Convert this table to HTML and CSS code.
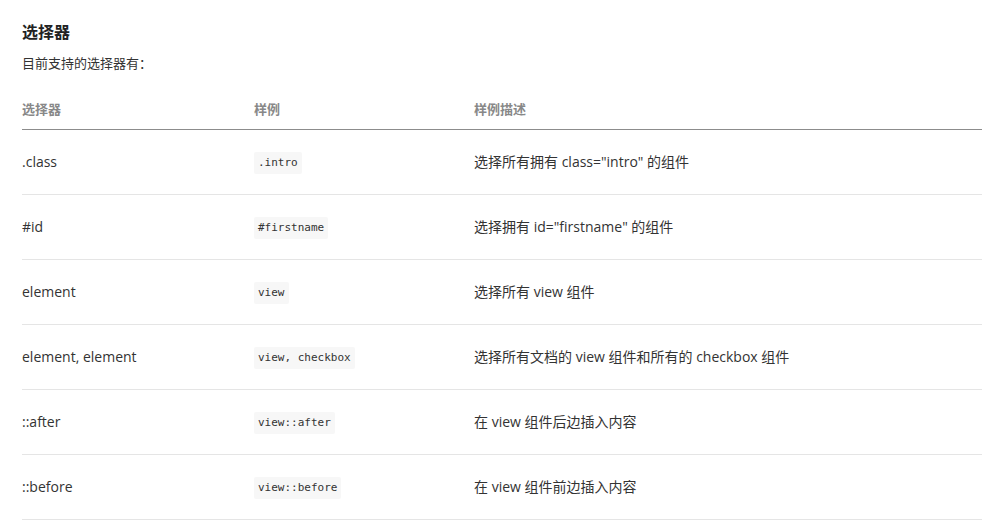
FILE: index.html
```html
<!DOCTYPE html>
<html lang="zh-CN">
<head>
<meta charset="utf-8">
<title>选择器</title>
<link rel="stylesheet" href="styles.css">
</head>
<body>
<div class="doc">
  <h3 class="title">选择器</h3>
  <p class="lead">目前支持的选择器有：</p>
  <div class="table">
    <div class="row head">
      <div class="cell">选择器</div>
      <div class="cell">样例</div>
      <div class="cell">样例描述</div>
    </div>
    <div class="row">
      <div class="cell">.class</div>
      <div class="cell"><code>.intro</code></div>
      <div class="cell">选择所有拥有 class="intro" 的组件</div>
    </div>
    <div class="row">
      <div class="cell">#id</div>
      <div class="cell"><code>#firstname</code></div>
      <div class="cell">选择拥有 id="firstname" 的组件</div>
    </div>
    <div class="row">
      <div class="cell">element</div>
      <div class="cell"><code>view</code></div>
      <div class="cell">选择所有 view 组件</div>
    </div>
    <div class="row">
      <div class="cell">element, element</div>
      <div class="cell"><code>view, checkbox</code></div>
      <div class="cell">选择所有文档的 view 组件和所有的 checkbox 组件</div>
    </div>
    <div class="row">
      <div class="cell">::after</div>
      <div class="cell"><code>view::after</code></div>
      <div class="cell">在 view 组件后边插入内容</div>
    </div>
    <div class="row">
      <div class="cell">::before</div>
      <div class="cell"><code>view::before</code></div>
      <div class="cell">在 view 组件前边插入内容</div>
    </div>
  </div>
</div>
</body>
</html>
```
FILE: styles.css
```css
html, body {
  margin: 0;
  padding: 0;
  background: #fff;
}
body {
  font-family: "Open Sans", "Noto Sans CJK SC", sans-serif;
  color: #333;
  font-size: 14px;
}
.doc {
  width: 960px;
  padding: 21px 0 0 22px;
}
.title {
  margin: 0;
  font-size: 16px;
  line-height: 22px;
  font-weight: 700;
  color: #222;
}
.lead {
  margin: 10px 0 0;
  font-size: 13px;
  line-height: 20px;
  color: #333;
}
.table {
  margin-top: 16px;
}
.row {
  display: grid;
  grid-template-columns: 232px 220px 1fr;
  align-items: center;
  height: 64px;
  border-bottom: 1px solid #e5e5e5;
  line-height: 20px;
}
.row.head {
  height: 40px;
  border-bottom: 1px solid #8c8c8c;
  font-size: 13px;
  font-weight: 700;
  color: #888;
}
code {
  font-family: "DejaVu Sans Mono", "Liberation Mono", monospace;
  font-size: 11px;
  line-height: 14px;
  background: #f7f7f7;
  color: #333;
  padding: 4px 4px;
  border-radius: 2px;
  display: inline-block;
}
```
